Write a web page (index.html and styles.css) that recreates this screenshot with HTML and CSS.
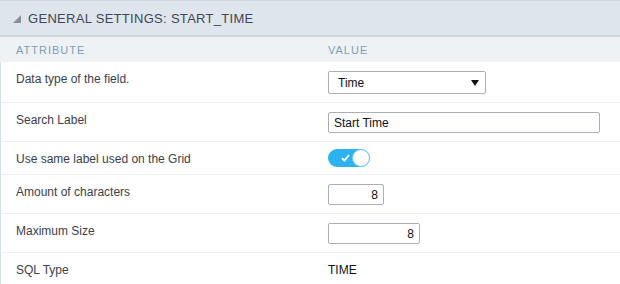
FILE: index.html
```html
<!DOCTYPE html>
<html>
<head>
<meta charset="utf-8">
<link rel="stylesheet" href="styles.css">
</head>
<body>
<div class="panel">
  <div class="panel-title">
    <svg class="corner" width="8" height="8" viewBox="0 0 8 8"><polygon points="8,0 8,8 0,8" fill="#8a8f98"/></svg>
    <span>General Settings: start_time</span>
  </div>
  <div class="grid">
    <div class="th">Attribute</div>
    <div class="th">Value</div>

    <div class="td label">Data type of the field.</div>
    <div class="td value">
      <div class="select"><span>Time</span><svg width="8" height="6" viewBox="0 0 8 6"><polygon points="0,0 8,0 4,6" fill="#111"/></svg></div>
    </div>

    <div class="td label">Search Label</div>
    <div class="td value"><div class="input wide">Start Time</div></div>

    <div class="td label">Use same label used on the Grid</div>
    <div class="td value">
      <div class="toggle">
        <svg class="check" width="9" height="8" viewBox="0 0 9 8"><path d="M1 4.2 L3.4 6.6 L8 1" fill="none" stroke="#fff" stroke-width="1.8"/></svg>
        <span class="knob"></span>
      </div>
    </div>

    <div class="td label">Amount of characters</div>
    <div class="td value"><div class="input num small">8</div></div>

    <div class="td label">Maximum Size</div>
    <div class="td value"><div class="input num medium">8</div></div>

    <div class="td label last">SQL Type</div>
    <div class="td value last"><span class="plain">TIME</span></div>
  </div>
</div>
</body>
</html>
```
FILE: styles.css
```css
* { box-sizing: border-box; }
html, body { margin: 0; padding: 0; background: #fff; }
body { font-family: "Liberation Sans", Arial, sans-serif; width: 620px; height: 284px; overflow: hidden; }

.panel { width: 620px; }

.panel-title {
  height: 37px;
  background: #dfe5ec;
  border-top: 1px solid #cfd8df;
  border-bottom: 2px solid #cdd6dd;
  display: flex;
  align-items: center;
  padding-left: 13px;
  gap: 7px;
  color: #3e4556;
  font-size: 13px;
  letter-spacing: 0.3px;
  text-transform: uppercase;
}
.corner { margin-top: 1px; }

.grid {
  display: grid;
  grid-template-columns: 312px 308px;
}

.th {
  height: 25px;
  background: #eef2f5;
  color: #7d9db5;
  font-size: 11px;
  letter-spacing: 1px;
  text-transform: uppercase;
  padding: 7px 0 0 16px;
}

.td {
  border-bottom: 1px solid #eceff3;
  padding: 9px 0 8px 16px;
  font-size: 12px;
  color: #3a3e4c;
}
.label { border-left: 1px solid #d8e0e7; padding: 10px 0 7px 15px; line-height: 15px; }
.td.last { border-bottom: none; }

.select {
  width: 158px;
  height: 23px;
  border: 1px solid #a8afba;
  border-radius: 2px;
  display: flex;
  align-items: center;
  justify-content: space-between;
  padding: 0 6px 0 9px;
  font-size: 12px;
  color: #111;
}

.input {
  height: 21px;
  border: 1px solid #a8afba;
  border-radius: 2px;
  font-size: 12px;
  color: #111;
  display: flex;
  align-items: center;
  padding: 0 5px;
}
.input.wide { width: 272px; }
.input.num { justify-content: flex-end; }
.input.small { width: 56px; }
.input.medium { width: 92px; }

.toggle {
  margin: -2px 0 -1px;
  width: 42px;
  height: 18px;
  border-radius: 9px;
  background: #2db2f0;
  position: relative;
  display: flex;
  align-items: center;
  padding-left: 13px;
}
.knob {
  position: absolute;
  right: 0;
  top: 0;
  width: 18px;
  height: 18px;
  border-radius: 50%;
  background: #fff;
  border: 1px solid #6fc7f2;
}

.plain { display: inline-block; padding-top: 1px; font-size: 12px; color: #111; line-height: 15px; }
```
